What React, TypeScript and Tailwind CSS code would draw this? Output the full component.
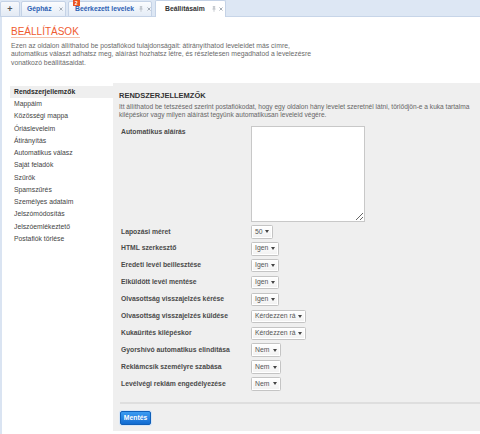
const navItems = [
  "Rendszerjellemzők",
  "Mappáim",
  "Közösségi mappa",
  "Óriásleveleim",
  "Átirányítás",
  "Automatikus válasz",
  "Saját feladók",
  "Szűrők",
  "Spamszűrés",
  "Személyes adataim",
  "Jelszómódosítás",
  "Jelszóemlékeztető",
  "Postafiók törlése",
];

const rows: { label: string; value: string; width: string }[] = [
  { label: "Lapozási méret", value: "50", width: "w-[22px]" },
  { label: "HTML szerkesztő", value: "Igen", width: "w-[28px]" },
  { label: "Eredeti levél beillesztése", value: "Igen", width: "w-[28px]" },
  { label: "Elküldött levél mentése", value: "Igen", width: "w-[28px]" },
  { label: "Olvasottság visszajelzés kérése", value: "Igen", width: "w-[28px]" },
  { label: "Olvasottság visszajelzés küldése", value: "Kérdezzen rá", width: "w-[55px]" },
  { label: "Kukaürítés kilépéskor", value: "Kérdezzen rá", width: "w-[55px]" },
  { label: "Gyorshívó automatikus elindítása", value: "Nem", width: "w-[30px]" },
  { label: "Reklámcsík személyre szabása", value: "Nem", width: "w-[30px]" },
  { label: "Levélvégi reklám engedélyezése", value: "Nem", width: "w-[30px]" },
];

function CloseIcon() {
  return (
    <svg width="4" height="4" viewBox="0 0 4 4" className="shrink-0">
      <path d="M0.5 0.5L3.5 3.5M3.5 0.5L0.5 3.5" stroke="#9aa3ad" strokeWidth="0.9" />
    </svg>
  );
}

function PinIcon() {
  return (
    <svg width="4" height="6" viewBox="0 0 4 6" className="shrink-0">
      <path d="M0.8 0.6H3.2M1.4 0.6V3M2.6 0.6V3M0.4 3.1H3.6M2 3.1V5.8" stroke="#b0b6bd" strokeWidth="0.7" fill="none" />
    </svg>
  );
}

function Arrow() {
  return (
    <svg width="4" height="3" viewBox="0 0 4 3" className="shrink-0">
      <polygon points="0,0 4,0 2,3" fill="#444" />
    </svg>
  );
}

function FakeSelect({ value, width }: { value: string; width: string }) {
  return (
    <div
      className={`${width} flex h-[13.5px] items-center justify-between rounded-[1.5px] border border-[#c4c4c4] bg-gradient-to-b from-white to-[#f1f1f1] px-[3px] text-[#555] shadow-[inset_0_0_0_1px_#fff]`}
    >
      <span>{value}</span>
      <Arrow />
    </div>
  );
}

function TabBar() {
  return (
    <div className="flex h-[17px] items-end border-b border-[#c7d5e8] bg-[#dde7f4]">
      {/* PLUS TAB */}
      <div className="-mb-px flex h-[16px] w-[20px] items-center justify-center rounded-t-[2px] border border-[#c4d2e6] bg-gradient-to-b from-[#f7f9fc] to-[#e3eaf4] text-[9px] font-bold text-[#555]">
        +
      </div>

      <div className="-mb-px ml-[1px] flex h-[16px] w-[45px] items-center rounded-t-[2px] border border-[#c4d2e6] bg-gradient-to-b from-[#fbfcfe] to-[#e4ecf7] pl-[5px] font-bold text-[#2d5fb3]">
        <span>Gépház</span>
        <span className="ml-[7px]">
          <CloseIcon />
        </span>
      </div>

      <div className="relative -mb-px ml-[2px] flex h-[16px] w-[84px] items-center rounded-t-[2px] border border-[#c4d2e6] bg-gradient-to-b from-[#fbfcfe] to-[#e4ecf7] pl-[6px] font-bold text-[#2d5fb3]">
        <span className="absolute left-[4px] top-[-2px] flex h-[6px] w-[6.5px] items-center justify-center bg-[#e9541f] text-[5px] font-bold leading-none text-white">
          2
        </span>
        <span>Beérkezett levelek</span>
        <span className="ml-[5px]">
          <PinIcon />
        </span>
        <span className="ml-[4px]">
          <CloseIcon />
        </span>
      </div>

      {/* ACTIVE TAB */}
      <div className="-mb-px ml-[3px] flex h-[17px] w-[71px] items-center rounded-t-[2px] border border-b-0 border-[#c4d2e6] bg-white pl-[9px] font-bold text-[#333]">
        <span>Beállításaim</span>
        <span className="ml-[7px]">
          <PinIcon />
        </span>
        <span className="ml-[3px]">
          <CloseIcon />
        </span>
      </div>
    </div>
  );
}

export default function App() {
  return (
    <div className="h-[434px] w-[480px] overflow-hidden bg-white font-['Liberation_Sans',Arial,sans-serif] text-[6.8px] leading-none text-[#555]">
      <TabBar />

      <div className="h-[417px] border-l-2 border-[#dae4f2]">
        {/* PAGE HEADER */}
        <div className="pl-[9px] pt-[9px]">
          <h1 className="inline-block border-b border-[#f5c2ad] pr-[1px] text-[10px] font-normal leading-[11px] text-[#ef5b30]">
            BEÁLLÍTÁSOK
          </h1>
          <p className="mt-[4px] whitespace-nowrap leading-[8.4px] text-[#6a6a6a]">
            Ezen az oldalon állíthatod be postafiókod tulajdonságait: átirányíthatod leveleidet más címre,
            <br />
            automatikus választ adhatsz meg, aláírást hozhatsz létre, és részletesen megadhatod a levelezésre
            <br />
            vonatkozó beállításaidat.
          </p>
        </div>

        <div className="mt-[16px] flex">
          {/* SIDE NAV */}
          <ul className="ml-[8px] w-[103px] shrink-0 pt-[3px]">
            {navItems.map((item, i) => (
              <li
                key={item}
                className={
                  i === 0
                    ? "flex h-[12.25px] items-center bg-[#efefef] pl-[4px] font-bold text-[#2b2b2b]"
                    : "flex h-[12.25px] items-center pl-[4px] text-[#444]"
                }
              >
                {item}
              </li>
            ))}
          </ul>

          {/* PANEL */}
          <div className="h-[348px] min-w-0 flex-1 bg-[#efefef] pl-[6px] pt-[7.5px]">
            <h2 className="text-[7.5px] font-bold leading-[9px] text-[#333]">RENDSZERJELLEMZŐK</h2>
            <p className="mt-[3.25px] whitespace-nowrap text-[6.6px] leading-[8.5px] text-[#666]">
              Itt állíthatod be tetszésed szerint postafiókodat, hogy egy oldalon hány levelet szeretnél látni, törlődjön-e a kuka tartalma
              <br />
              kilépéskor vagy milyen aláírást tegyünk automatikusan leveleid végére.
            </p>

            <div className="mt-[6.25px] flex">
              <div className="w-[132px] shrink-0 pl-[2px] pt-[3px] font-bold text-[#4a4a4a]">Automatikus aláírás</div>
              <textarea
                readOnly
                className="h-[96px] w-[114px] border border-[#c8c8c8] bg-white outline-none"
              />
            </div>

            <div className="mt-[1.3px]">
              {rows.map((row) => (
                <div key={row.label} className="flex h-[16.9px] items-center">
                  <div className="w-[132px] shrink-0 pl-[2px] font-bold text-[#4a4a4a]">{row.label}</div>
                  <FakeSelect value={row.value} width={row.width} />
                </div>
              ))}
            </div>

            <div className="ml-[1px] mt-[9.8px] h-[2px] bg-[#dedede]" />

            <button className="ml-[1px] mt-[7px] h-[14px] w-[31px] rounded-[2px] border border-[#0f5fb8] bg-gradient-to-b from-[#3b9cf2] to-[#116bd1] font-bold text-white shadow-[0_0_0_1px_#d6e6f8]">
              Mentés
            </button>
          </div>
        </div>
      </div>
    </div>
  );
}
